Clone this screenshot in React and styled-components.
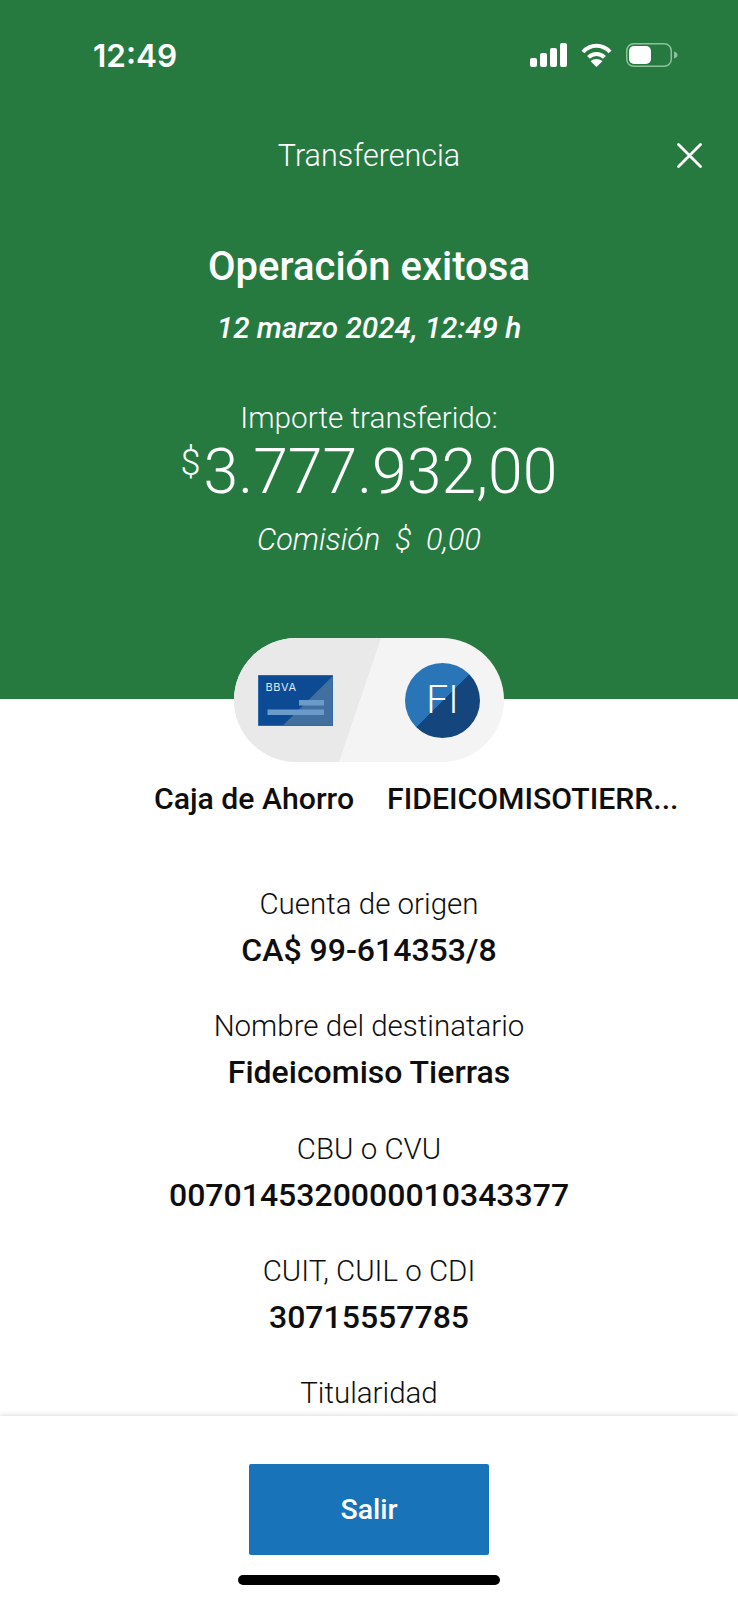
import styled, { createGlobalStyle } from "styled-components";

const GlobalStyle = createGlobalStyle`
  html, body {
    margin: 0;
    padding: 0;
    background: #fff;
  }
  * {
    box-sizing: border-box;
  }
`;

const Screen = styled.div`
  display: flex;
  flex-direction: column;
  width: 738px;
  height: 1600px;
  overflow: hidden;
  font-family: Roboto, "Liberation Sans", sans-serif;
  color: #0e0e0e;
  background: #fff;
`;

const Hero = styled.header`
  display: flex;
  flex-direction: column;
  align-items: center;
  flex: none;
  height: 699px;
  color: #fff;
  background: #277a3f;
`;

const StatusBar = styled.div`
  display: flex;
  align-items: center;
  justify-content: space-between;
  width: 100%;
  height: 110px;
  padding: 0 60px 0 93px;
`;

const Clock = styled.span`
  font-family: Inter, sans-serif;
  font-size: 31.5px;
  font-weight: 600;
`;

const StatusIcons = styled.div`
  display: flex;
  align-items: center;
  gap: 14px;
`;

const NavRow = styled.div`
  display: grid;
  grid-template-columns: 1fr auto 1fr;
  align-items: center;
  width: 100%;
  height: 90px;
  padding: 0 36px;
`;

const NavTitle = styled.h1`
  grid-column: 2;
  margin: 0;
  font-size: 30.5px;
  font-weight: 300;
`;

const CloseButton = styled.button`
  grid-column: 3;
  justify-self: end;
  display: grid;
  place-items: center;
  padding: 0;
  border: none;
  background: none;
`;

const Heading = styled.h2`
  margin: 45px 0 0;
  font-size: 40px;
  font-weight: 500;
  line-height: 44px;
`;

const DateLine = styled.p`
  margin: 19px 0 0;
  font-size: 29.7px;
  font-style: italic;
  font-weight: 500;
  line-height: 40px;
`;

const AmountLabel = styled.p`
  margin: 52px 0 0;
  font-size: 29.7px;
  font-weight: 300;
  line-height: 36px;
`;

const Amount = styled.div`
  display: flex;
  align-items: flex-start;
  margin: 1px 0 0 0;
  font-size: 62.5px;
  font-weight: 300;
  line-height: 70px;
`;

const Currency = styled.span`
  margin-right: 3px;
  font-size: 36px;
  line-height: 52px;
`;

const Commission = styled.p`
  margin: 15px 0 0;
  font-size: 30.5px;
  font-style: italic;
  font-weight: 300;
  line-height: 36px;
  white-space: pre;
`;

const Pill = styled.div`
  position: relative;
  display: flex;
  align-items: center;
  justify-content: space-between;
  flex: none;
  width: 270px;
  height: 124px;
  margin: -61px 0 0 234px;
  padding: 0 24px;
  overflow: hidden;
  border-radius: 62px;
  background: #f4f4f4;

  &::before {
    content: "";
    position: absolute;
    inset: 0;
    background: #e9e9e9;
    clip-path: polygon(0 0, 147px 0, 105px 100%, 0 100%);
  }
`;

const CardArt = styled.svg`
  position: relative;
  display: block;
`;

const Avatar = styled.div`
  position: relative;
  display: grid;
  place-items: center;
  width: 75px;
  height: 75px;
  border-radius: 50%;
  color: #fff;
  font-size: 39px;
  font-weight: 300;
  background: linear-gradient(135deg, #2a74b8 50%, #14457c 50%);
`;

const Accounts = styled.div`
  display: flex;
  gap: 33px;
  flex: none;
  margin-top: 19px;
  padding-left: 154px;
`;

const AccountName = styled.span`
  font-size: 30.2px;
  font-weight: 500;
  line-height: 36px;
  white-space: nowrap;
`;

const Details = styled.main`
  display: flex;
  flex-direction: column;
  align-items: center;
  gap: 38.3px;
  flex: 1;
  min-height: 0;
  margin-top: 69px;
  overflow: hidden;
`;

const Field = styled.div`
  display: flex;
  flex-direction: column;
  align-items: center;
  gap: 8px;
  flex: none;
`;

const FieldLabel = styled.span`
  font-size: 29.5px;
  font-weight: 300;
  line-height: 36px;
`;

const FieldValue = styled.span`
  font-size: 32px;
  font-weight: 500;
  line-height: 40px;
`;

const Footer = styled.footer`
  position: relative;
  display: flex;
  flex-direction: column;
  align-items: center;
  flex: none;
  height: 184px;
  padding-top: 48px;
  background: #fff;
  box-shadow: 0 -1px 5px rgba(0, 0, 0, 0.14);
`;

const ExitButton = styled.button`
  width: 240px;
  height: 91px;
  border: none;
  border-radius: 2px;
  color: #fff;
  font-family: inherit;
  font-size: 28.5px;
  font-weight: 500;
  background: #1973b8;
`;

const HomeBar = styled.div`
  width: 262px;
  height: 10px;
  margin-top: 20px;
  border-radius: 5px;
  background: #000;
`;

const fields = [
  ["Cuenta de origen", "CA$ 99-614353/8"],
  ["Nombre del destinatario", "Fideicomiso Tierras"],
  ["CBU o CVU", "0070145320000010343377"],
  ["CUIT, CUIL o CDI", "30715557785"],
  ["Titularidad"],
];

const App = () => {
  return (
    <Screen>
      <GlobalStyle />
      <Hero>
        <StatusBar>
          <Clock>12:49</Clock>
          <StatusIcons>
            <svg width="37" height="24" viewBox="0 0 37 24" fill="#fff">
              <rect x="0" y="15" width="7" height="9" rx="2" />
              <rect x="10" y="10" width="7" height="14" rx="2" />
              <rect x="20" y="5" width="7" height="19" rx="2" />
              <rect x="30" y="0" width="7" height="24" rx="2" />
            </svg>
            <svg width="31" height="24" viewBox="0 0 31 24" fill="none" stroke="#fff" strokeWidth="4">
              <path d="M2 9 C9.5 0.8 21.5 0.8 29 9" />
              <path d="M7.5 14.4 C12 9.8 19 9.8 23.5 14.4" />
              <path d="M15.5 24 L9.6 18.2 C12.8 15.2 18.2 15.2 21.4 18.2 Z" fill="#fff" stroke="none" />
            </svg>
            <svg width="52" height="24" viewBox="0 0 52 24" fill="none">
              <rect x="0.75" y="0.75" width="44.5" height="22.5" rx="7" stroke="#8fc09d" strokeWidth="1.5" />
              <rect x="3" y="3" width="22" height="18" rx="5" fill="#fff" />
              <path d="M48 8.5 C50.5 9.5 51.5 10.5 51.5 12 C51.5 13.5 50.5 14.5 48 15.5 Z" fill="#8fc09d" />
            </svg>
          </StatusIcons>
        </StatusBar>
        <NavRow>
          <NavTitle>Transferencia</NavTitle>
          <CloseButton aria-label="Cerrar">
            <svg width="25" height="25" viewBox="0 0 25 25" stroke="#fff" strokeWidth="2.8" strokeLinecap="round">
              <path d="M1.5 1.5 L23.5 23.5 M23.5 1.5 L1.5 23.5" />
            </svg>
          </CloseButton>
        </NavRow>
        <Heading>Operación exitosa</Heading>
        <DateLine>12 marzo 2024, 12:49 h</DateLine>
        <AmountLabel>Importe transferido:</AmountLabel>
        <Amount>
          <Currency>$</Currency>
          3.777.932,00
        </Amount>
        <Commission>Comisión  $  0,00</Commission>
      </Hero>

      <Pill>
        <CardArt width="75" height="51" viewBox="0 0 75 51">
          <rect width="75" height="51" fill="#3a78b8" />
          <rect x="0.7" y="0.7" width="73.6" height="49.6" fill="#0c4a94" />
          <path d="M74.3 1.5 L25 50.3 L74.3 50.3 Z" fill="#41709f" />
          <rect x="41" y="25" width="25" height="5.5" fill="#6b9bcb" />
          <rect x="9.5" y="34.5" width="56.5" height="5.5" fill="#6b9bcb" />
          <text x="7.5" y="16" fill="#dfe9f5" fontFamily="Inter, sans-serif" fontSize="11" fontWeight="400" letterSpacing="0.6">
            BBVA
          </text>
        </CardArt>
        <Avatar>FI</Avatar>
      </Pill>

      <Accounts>
        <AccountName>Caja de Ahorro</AccountName>
        <AccountName>FIDEICOMISOTIERR...</AccountName>
      </Accounts>

      <Details>
        {fields.map(([label, value]) => (
          <Field key={label}>
            <FieldLabel>{label}</FieldLabel>
            {value && <FieldValue>{value}</FieldValue>}
          </Field>
        ))}
      </Details>

      <Footer>
        <ExitButton>Salir</ExitButton>
        <HomeBar />
      </Footer>
    </Screen>
  );
};

export default App;
